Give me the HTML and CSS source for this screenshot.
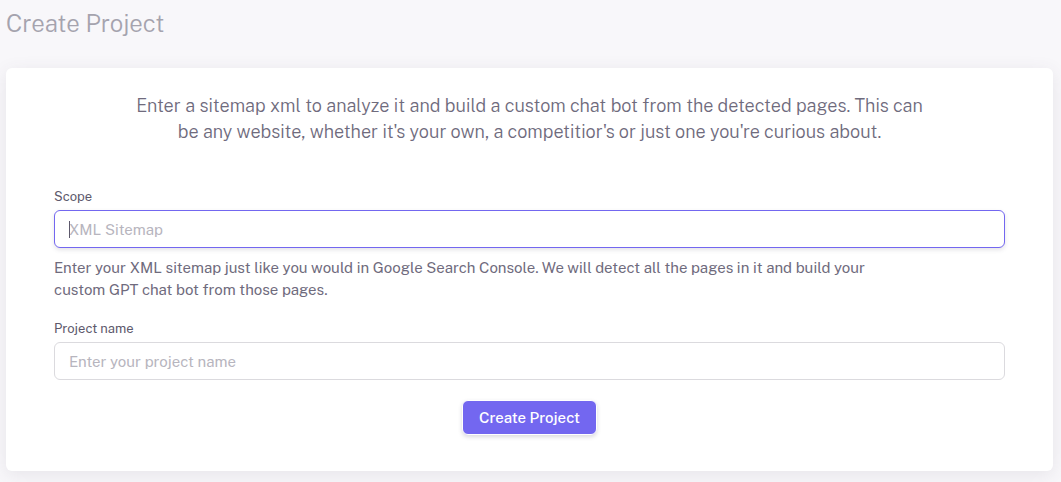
FILE: index.html
```html
<!DOCTYPE html>
<html lang="en">
<head>
<meta charset="utf-8">
<meta name="viewport" content="width=device-width, initial-scale=1">
<title>Create Project</title>
<link rel="stylesheet" href="styles.css">
</head>
<body>
<main class="page">
  <h1 class="page-title">Create Project</h1>
  <section class="card">
    <p class="intro">Enter a sitemap xml to analyze it and build a custom chat bot from the detected pages. This can be any website, whether it's your own, a competitior's or just one you're curious about.</p>
    <form class="form">
      <div class="field">
        <label class="label" for="scope">Scope</label>
        <div class="control control-active">
          <input class="input" id="scope" type="text" placeholder="XML Sitemap" aria-describedby="scope-help">
        </div>
        <p class="help" id="scope-help">Enter your XML sitemap just like you would in Google Search Console. We will detect all the pages in it and build your custom GPT chat bot from those pages.</p>
      </div>
      <div class="field">
        <label class="label" for="name">Project name</label>
        <div class="control">
          <input class="input" id="name" type="text" placeholder="Enter your project name">
        </div>
      </div>
      <button class="submit" type="submit">Create Project</button>
    </form>
  </section>
</main>
</body>
</html>
```
FILE: styles.css
```css
* { box-sizing: border-box; }
body {
  margin: 0;
  background: #f8f7fa;
  color: #6f6b7d;
  font: 15px/22px "Public Sans", Inter, "Liberation Sans", sans-serif;
}
h1, p { margin: 0; }
.page { padding: 7px 8px 11px 6px; }
.page-title {
  margin-bottom: 29px;
  color: #a5a3ae;
  font-size: 24px;
  line-height: 32px;
  font-weight: 300;
}
.card {
  padding: 25px 48px 36px;
  border-radius: 6px;
  background: #fff;
  box-shadow: 0 4px 18px rgba(75, 70, 92, 0.1);
}
.intro {
  max-width: 800px;
  margin: 0 auto 42px;
  font-size: 18px;
  line-height: 26px;
  font-weight: 300;
  text-align: center;
}
.form { display: flex; flex-direction: column; }
.field {
  display: flex;
  flex-direction: column;
  margin-bottom: 18px;
}
.label {
  margin-bottom: 3px;
  color: #5d596c;
  font-size: 13px;
  line-height: 20px;
}
.control { position: relative; display: flex; }
.input {
  width: 100%;
  height: 38px;
  padding: 7px 14px;
  border: 1px solid #dbdade;
  border-radius: 6px;
  background: #fff;
  color: #6f6b7d;
  font: inherit;
  outline: none;
}
.input::placeholder { color: #b7b5be; opacity: 1; }
.control-active .input,
.input:focus {
  border-color: #7367f0;
  box-shadow: 0 2px 4px rgba(75, 70, 92, 0.15);
}
/* Insertion caret of the active field */
.control-active::after {
  content: "";
  position: absolute;
  top: 11px;
  left: 15px;
  width: 1px;
  height: 17px;
  background: #5d596c;
}
.help { max-width: 840px; margin-top: 9px; }
.submit {
  align-self: center;
  margin-top: 2px;
  padding: 6px 16px;
  border: 1px solid #fff;
  border-radius: 6px;
  background: #7367f0;
  color: #fff;
  font: inherit;
  line-height: 21px;
  font-weight: 500;
  box-shadow: 0 2px 4px rgba(75, 70, 92, 0.2);
}
```
